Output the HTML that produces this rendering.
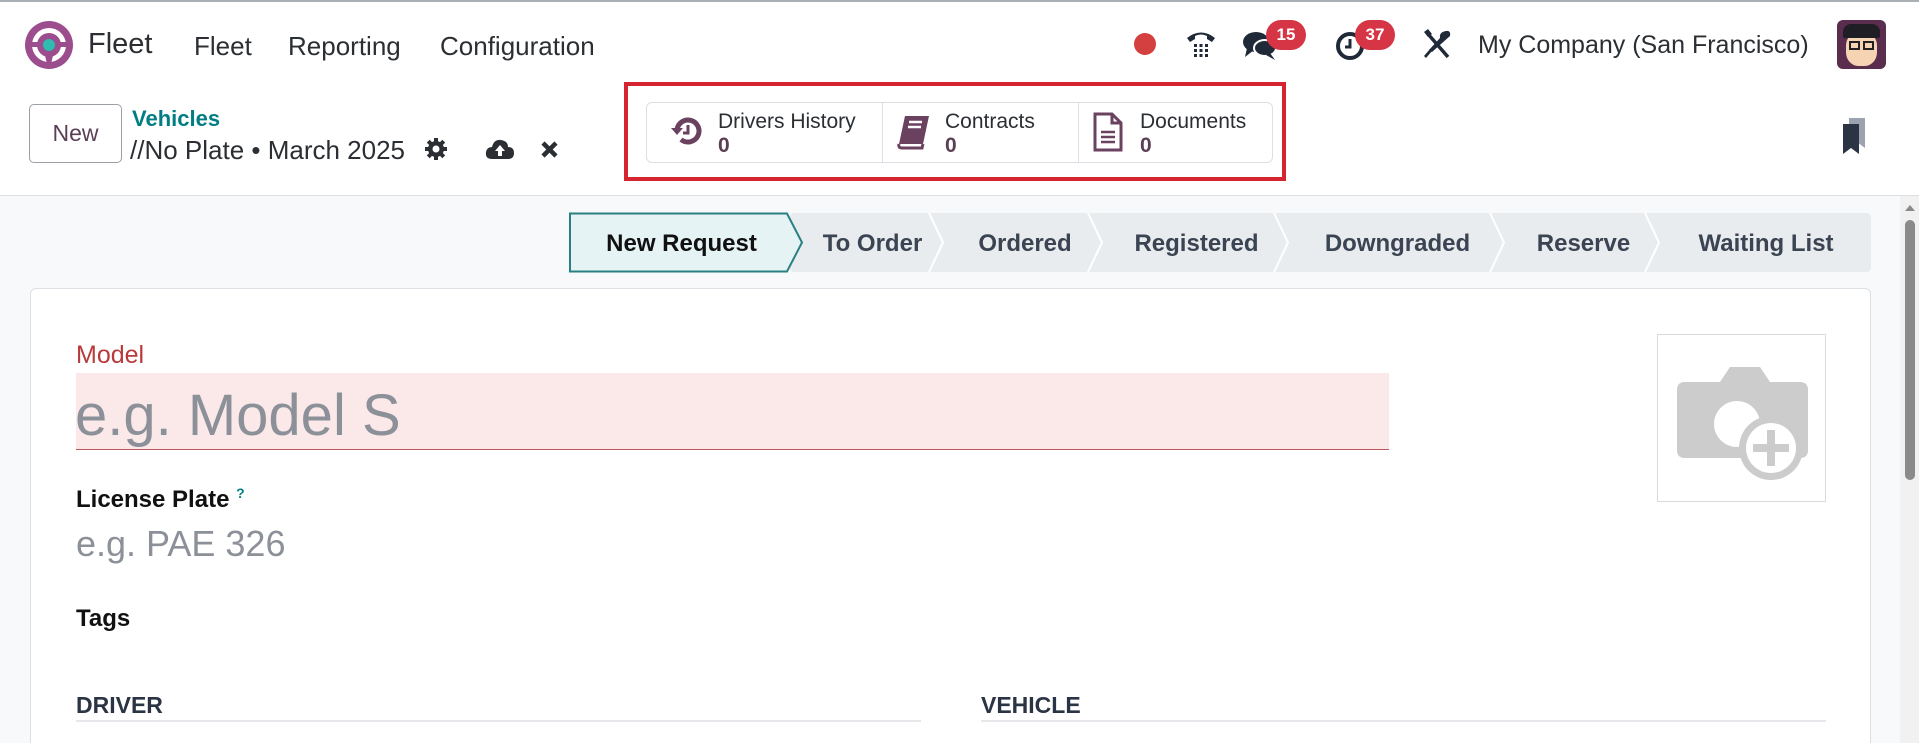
<!DOCTYPE html>
<html><head><meta charset="utf-8"><style>
*{margin:0;padding:0;box-sizing:border-box}
html{width:1919px;height:743px;overflow:hidden}
body{width:1919px;height:743px;overflow:hidden;background:#f8f9fa;font-family:"Liberation Sans",sans-serif;color:#374151;position:relative}
.a{position:absolute;white-space:nowrap}
</style></head><body>
<div class="a" style="left:0;top:0;width:1919px;height:196px;background:#fff;border-top:2px solid #aab0b3;border-bottom:1px solid #dcdfe3"></div>
<svg class="a" style="left:24px;top:20px" width="50" height="50" viewBox="0 0 50 50"><circle cx="25" cy="25" r="24" fill="#9b4d8e"/><circle cx="25" cy="25" r="17" fill="#fff"/><circle cx="25" cy="25" r="12" fill="#9b4d8e"/><path d="M6 22 H44 V27 H31 L27 44 H23 L19 27 H6Z" fill="#9b4d8e"/><circle cx="25" cy="25" r="6" fill="#2ebcb0"/></svg>
<div class="a" style="left:88px;top:28px;font-size:29px;color:#2b2f33">Fleet</div>
<div class="a" style="left:194px;top:31px;font-size:26px;color:#2b2f33">Fleet</div>
<div class="a" style="left:288px;top:31px;font-size:26px;color:#2b2f33">Reporting</div>
<div class="a" style="left:440px;top:31px;font-size:26px;color:#2b2f33">Configuration</div>
<div class="a" style="left:1134px;top:33px;width:22px;height:22px;border-radius:50%;background:#d44040"></div>
<svg class="a" style="left:1184px;top:27px" width="34" height="34" viewBox="0 0 34 34"><path d="M3 11 Q17 0 31 11 L28 15 L23 12 L23 9 Q17 6 11 9 L11 12 L6 15Z" fill="#1f2937"/><g fill="#1f2937"><rect x="10" y="17" width="3" height="3"/><rect x="15.5" y="17" width="3" height="3"/><rect x="21" y="17" width="3" height="3"/><rect x="10" y="22" width="3" height="3"/><rect x="15.5" y="22" width="3" height="3"/><rect x="21" y="22" width="3" height="3"/><rect x="10" y="27" width="3" height="3"/><rect x="15.5" y="27" width="3" height="3"/><rect x="21" y="27" width="3" height="3"/></g></svg>
<svg class="a" style="left:1242px;top:28px" width="36" height="34" viewBox="0 0 36 34"><ellipse cx="14" cy="14" rx="13" ry="10" fill="#1f2937"/><path d="M5 20 L3 29 L12 22Z" fill="#1f2937"/><ellipse cx="23" cy="20" rx="11" ry="8" fill="#1f2937" stroke="#fff" stroke-width="2"/><path d="M28 25 L33 32 L24 27Z" fill="#1f2937"/></svg>
<div class="a" style="left:1266px;top:20px;width:40px;height:30px;border-radius:15px;background:#d63545;color:#fff;font-size:17px;font-weight:bold;text-align:center;line-height:30px">15</div>
<svg class="a" style="left:1334px;top:30px" width="32" height="32" viewBox="0 0 32 32"><circle cx="16" cy="16" r="12" fill="none" stroke="#1f2937" stroke-width="4"/><path d="M16 9 V17 H11" fill="none" stroke="#1f2937" stroke-width="3"/></svg>
<div class="a" style="left:1355px;top:20px;width:40px;height:30px;border-radius:15px;background:#d63545;color:#fff;font-size:17px;font-weight:bold;text-align:center;line-height:30px">37</div>
<svg class="a" style="left:1422px;top:28px" width="30" height="32" viewBox="0 0 30 32"><path d="M6 6 L26 29" stroke="#1f2937" stroke-width="3.5"/><path d="M2 4 L6 1 L10 6 L6 9Z" fill="#1f2937"/><path d="M24 3 Q29 2 28 8 L10 24 L7 22 L18 10 Q17 4 24 3Z" fill="#1f2937"/><path d="M10 23 L4 30 L2 28 L8 21Z" fill="#1f2937"/></svg>
<div class="a" style="left:1478px;top:31px;font-size:25px;color:#2b2f33">My Company (San Francisco)</div>
<div class="a" style="left:1837px;top:20px;width:49px;height:49px;border-radius:6px;background:#5a2d4e;overflow:hidden"><div style="position:absolute;left:9px;top:12px;width:31px;height:34px;border-radius:40%;background:#f5d3b3"></div><div style="position:absolute;left:6px;top:4px;width:37px;height:14px;border-radius:8px 8px 2px 2px;background:#1e1e24"></div><div style="position:absolute;left:12px;top:21px;width:11px;height:9px;border:2px solid #222"></div><div style="position:absolute;left:26px;top:21px;width:11px;height:9px;border:2px solid #222"></div></div>
<div class="a" style="left:29px;top:104px;width:93px;height:59px;border:1px solid #9aa0a6;border-radius:5px;font-size:23px;color:#5b3f55;text-align:center;line-height:57px">New</div>
<div class="a" style="left:132px;top:106px;font-size:22px;font-weight:bold;color:#017e84">Vehicles</div>
<div class="a" style="left:130px;top:135px;font-size:26px;color:#2b2f33">//No Plate • March 2025</div>
<svg class="a" style="left:424px;top:137px" width="24" height="24" viewBox="0 0 24 24"><g fill="#2b2f33"><circle cx="12" cy="12" r="8"/><rect x="10" y="1" width="4" height="22"/><rect x="1" y="10" width="22" height="4"/><rect x="10" y="1" width="4" height="22" transform="rotate(45 12 12)"/><rect x="10" y="1" width="4" height="22" transform="rotate(-45 12 12)"/></g><circle cx="12" cy="12" r="3.5" fill="#fff"/></svg>
<svg class="a" style="left:485px;top:137px" width="30" height="24" viewBox="0 0 30 24"><path d="M7 22 Q0 22 1 15 Q2 10 7 10 Q9 2 16 3 Q23 4 23 10 Q29 10 29 16 Q29 22 23 22Z" fill="#2b2f33"/><path d="M15 8 L10 14 H13 V19 H17 V14 H20Z" fill="#fff"/></svg>
<svg class="a" style="left:540px;top:140px" width="19" height="19" viewBox="0 0 19 19"><path d="M3 3 L16 16 M16 3 L3 16" stroke="#2b2f33" stroke-width="4.5"/></svg>
<div class="a" style="left:624px;top:82px;width:662px;height:99px;border:4px solid #d42531"></div>
<div class="a" style="left:646px;top:102px;width:627px;height:61px;border:1px solid #dcdfe3;border-radius:6px;background:#fff"></div>
<div class="a" style="left:882px;top:102px;width:1px;height:61px;background:#dcdfe3"></div>
<div class="a" style="left:1078px;top:102px;width:1px;height:61px;background:#dcdfe3"></div>
<svg class="a" style="left:670px;top:114px" width="34" height="34" viewBox="0 0 34 34"><path d="M7 17 A11 11 0 1 1 11 25.5" fill="none" stroke="#6b4160" stroke-width="5"/><path d="M1 14 L7 21 L13 14Z" fill="#6b4160"/><path d="M18 11 V19 H13" fill="none" stroke="#6b4160" stroke-width="3"/></svg>
<div class="a" style="left:718px;top:110px;font-size:21px;color:#2b2f33;line-height:24px">Drivers History<br><b style="color:#5b3f55">0</b></div>
<svg class="a" style="left:896px;top:114px" width="36" height="36" viewBox="0 0 36 36"><path d="M9 2 H33 L27 30 H3Z" fill="#6b4160"/><path d="M3 30 Q2 34 6 34 H26 L27 30" fill="none" stroke="#6b4160" stroke-width="3"/><path d="M13 8 H26 M12 13 H25" stroke="#fff" stroke-width="2.5"/></svg>
<div class="a" style="left:945px;top:110px;font-size:21px;color:#2b2f33;line-height:24px">Contracts<br><b style="color:#5b3f55">0</b></div>
<svg class="a" style="left:1092px;top:112px" width="32" height="40" viewBox="0 0 32 40"><path d="M3 2 H20 L29 11 V38 H3Z M20 2 V11 H29" fill="none" stroke="#6b4160" stroke-width="3"/><path d="M9 20 H23 M9 25 H23 M9 30 H23" stroke="#6b4160" stroke-width="2.5"/></svg>
<div class="a" style="left:1140px;top:110px;font-size:21px;color:#2b2f33;line-height:24px">Documents<br><b style="color:#5b3f55">0</b></div>
<svg class="a" style="left:1841px;top:118px" width="26" height="38" viewBox="0 0 26 38"><path d="M8 0 H24 V30 L16 24 L8 30Z" fill="#9ca3af"/><path d="M2 6 H18 V36 L10 30 L2 36Z" fill="#2b3444"/></svg>
<svg class="a" style="left:0;top:0" width="1919" height="290"><rect x="790" y="213" width="1081" height="59" rx="4" fill="#e9ecef"/><path d="M570 213.5 H787 L802 242.5 L787 271.5 H570Z" fill="#e6f3f4" stroke="#2a7f82" stroke-width="2"/><g fill="none" stroke="#fff" stroke-width="2"><path d="M929 213 L943 242.5 L929 272"/><path d="M1088 213 L1102 242.5 L1088 272"/><path d="M1274 213 L1288 242.5 L1274 272"/><path d="M1490 213 L1504 242.5 L1490 272"/><path d="M1645 213 L1659 242.5 L1645 272"/></g></svg>
<div class="a" style="left:569px;top:230px;width:225px;text-align:center;font-size:24px;font-weight:bold;color:#111">New Request</div>
<div class="a" style="left:805px;top:230px;width:135px;text-align:center;font-size:24px;font-weight:bold;color:#3b4452">To Order</div>
<div class="a" style="left:945px;top:230px;width:160px;text-align:center;font-size:24px;font-weight:bold;color:#3b4452">Ordered</div>
<div class="a" style="left:1104px;top:230px;width:185px;text-align:center;font-size:24px;font-weight:bold;color:#3b4452">Registered</div>
<div class="a" style="left:1290px;top:230px;width:215px;text-align:center;font-size:24px;font-weight:bold;color:#3b4452">Downgraded</div>
<div class="a" style="left:1506px;top:230px;width:155px;text-align:center;font-size:24px;font-weight:bold;color:#3b4452">Reserve</div>
<div class="a" style="left:1661px;top:230px;width:210px;text-align:center;font-size:24px;font-weight:bold;color:#3b4452">Waiting List</div>
<div class="a" style="left:30px;top:288px;width:1841px;height:470px;background:#fff;border:1px solid #dcdfe3;border-radius:6px"></div>
<div class="a" style="left:76px;top:341px;font-size:25px;color:#b83a3a">Model</div>
<div class="a" style="left:76px;top:373px;width:1313px;height:77px;background:#fbe8e9;border-bottom:1px solid #c0565e"></div>
<div class="a" style="left:75px;top:382px;font-size:58px;color:#8c9098">e.g. Model S</div>
<div class="a" style="left:76px;top:485px;font-size:24px;font-weight:bold;color:#111">License Plate <sup style="font-size:14px;color:#017e84">?</sup></div>
<div class="a" style="left:76px;top:523px;font-size:36px;color:#8c9098">e.g. PAE 326</div>
<div class="a" style="left:76px;top:605px;font-size:24px;font-weight:bold;color:#111">Tags</div>
<div class="a" style="left:76px;top:692px;font-size:23px;font-weight:bold;color:#2b3444">DRIVER</div>
<div class="a" style="left:76px;top:720px;width:845px;height:2px;background:#e5e7eb"></div>
<div class="a" style="left:981px;top:692px;font-size:23px;font-weight:bold;color:#2b3444">VEHICLE</div>
<div class="a" style="left:981px;top:720px;width:845px;height:2px;background:#e5e7eb"></div>
<div class="a" style="left:1657px;top:334px;width:169px;height:168px;border:1px solid #d8dadd;background:#fff"></div>
<svg class="a" style="left:1675px;top:362px" width="135" height="120" viewBox="0 0 135 120"><path d="M10 20 H45 L55 5 H85 L95 20 H125 Q133 20 133 28 V88 Q133 96 125 96 H10 Q2 96 2 88 V28 Q2 20 10 20Z" fill="#cccccc"/><circle cx="62" cy="62" r="23" fill="#fff"/><circle cx="96" cy="86" r="32" fill="#cccccc"/><circle cx="96" cy="86" r="25" fill="#fff"/><path d="M96 68 V104 M78 86 H114" stroke="#cccccc" stroke-width="8"/></svg>
<div class="a" style="left:1900px;top:196px;width:19px;height:547px;background:#f1f1f1"></div>
<div class="a" style="left:1905px;top:205px;width:0;height:0;border-left:5px solid transparent;border-right:5px solid transparent;border-bottom:6px solid #8a8a8a"></div>
<div class="a" style="left:1905px;top:220px;width:10px;height:260px;border-radius:5px;background:#8a8a8a"></div>
</body></html>
